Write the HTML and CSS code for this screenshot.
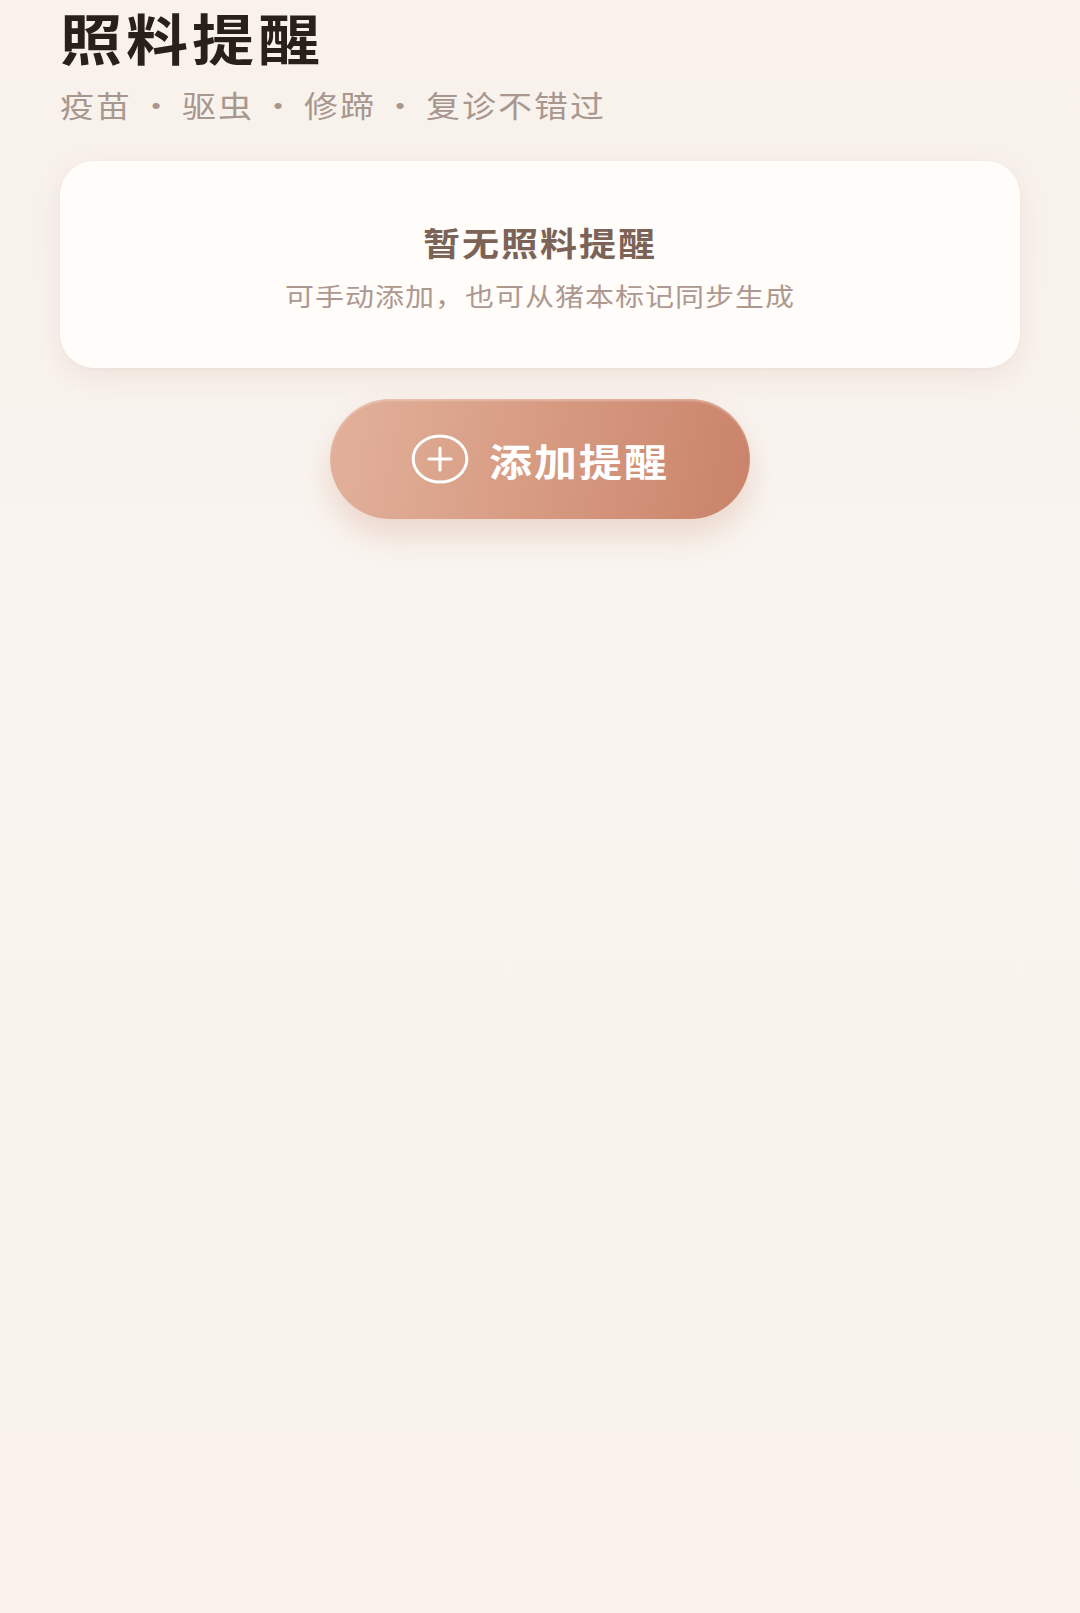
FILE: index.html
```html
<!DOCTYPE html>
<html lang="zh-CN">
<head>
<meta charset="utf-8">
<title>照料提醒</title>
<link rel="stylesheet" href="styles.css">
</head>
<body>
<main class="page">
  <header class="header">
    <h1 class="title">照料提醒</h1>
    <p class="subtitle"><span class="tag">疫苗</span><span class="dot">•</span><span class="tag">驱虫</span><span class="dot">•</span><span class="tag">修蹄</span><span class="dot">•</span><span class="tag">复诊不错过</span></p>
  </header>
  <section class="empty-card">
    <h2 class="empty-title">暂无照料提醒</h2>
    <p class="empty-desc">可手动添加，也可从猪本标记同步生成</p>
  </section>
  <div class="actions">
    <button class="add-btn" type="button">
      <svg class="add-icon" viewBox="0 0 58 50" width="58" height="50" aria-hidden="true">
        <ellipse cx="29" cy="25" rx="26.8" ry="23" fill="none" stroke="#ffffff" stroke-width="3"/>
        <path d="M29 14 V36 M18 25 H40" stroke="#ffffff" stroke-width="3" stroke-linecap="round"/>
      </svg>
      <span class="add-label">添加提醒</span>
    </button>
  </div>
</main>
</body>
</html>
```
FILE: styles.css
```css
html, body {
  margin: 0;
  padding: 0;
}
body {
  min-height: 1613px;
  background: linear-gradient(180deg, #f8f1ec 0%, #f9f4ef 40%, #f9f2ec 100%);
  font-family: "Noto Sans CJK SC", "Noto Sans", sans-serif;
  color: #2a211c;
}
.page {
  padding: 0 60px;
  display: flex;
  flex-direction: column;
}
.header {
  display: flex;
  flex-direction: column;
}
.title {
  margin: 0;
  font-size: 62px;
  line-height: 72px;
  font-weight: 700;
  color: #2a201b;
  letter-spacing: 4px;
  transform: scaleY(0.88);
  transform-origin: left center;
}
.subtitle {
  margin: 11px 0 0;
  font-size: 34px;
  line-height: 44px;
  color: #a8978e;
  display: flex;
  align-items: center;
  transform: scaleY(0.88);
  transform-origin: left center;
}
.subtitle .tag {
  letter-spacing: 2px;
}
.subtitle .dot {
  font-family: "Liberation Sans", sans-serif;
  font-size: 26px;
  width: 52px;
  margin-left: -2px;
  text-align: center;
  color: #a8978e;
}
.empty-card {
  margin-top: 34px;
  height: 207px;
  box-sizing: border-box;
  padding-top: 56px;
  background: #fffcf9;
  border-radius: 34px;
  box-shadow: 0 10px 30px rgba(190, 150, 130, 0.16), 0 1px 3px rgba(190, 150, 130, 0.08);
  display: flex;
  flex-direction: column;
  align-items: center;
}
.empty-title {
  margin: 0;
  font-size: 37px;
  line-height: 50px;
  font-weight: 700;
  color: #7b6358;
  letter-spacing: 2px;
  transform: scaleY(0.88);
}
.empty-desc {
  margin: 8px 0 0;
  font-size: 29px;
  line-height: 40px;
  color: #ad9990;
  letter-spacing: 1px;
  transform: scaleY(0.88);
}
.actions {
  margin-top: 31px;
  display: flex;
  justify-content: center;
}
.add-btn {
  width: 420px;
  height: 120px;
  border: none;
  border-radius: 60px;
  background: linear-gradient(100deg, #e2b19b 0%, #d89d84 45%, #c9836a 100%);
  box-shadow: 0 16px 28px rgba(200, 130, 105, 0.25), inset 0 2px 2px rgba(255, 235, 225, 0.35);
  display: flex;
  align-items: center;
  justify-content: center;
  gap: 20px;
  padding: 0;
  cursor: pointer;
  font-family: "Noto Sans CJK SC", "Noto Sans", sans-serif;
}
.add-icon {
  width: 58px;
  height: 50px;
  display: block;
}
.add-label {
  display: block;
  font-size: 43px;
  line-height: 56px;
  font-weight: 700;
  color: #ffffff;
  letter-spacing: 2px;
  transform: scaleY(0.88);
}
```
